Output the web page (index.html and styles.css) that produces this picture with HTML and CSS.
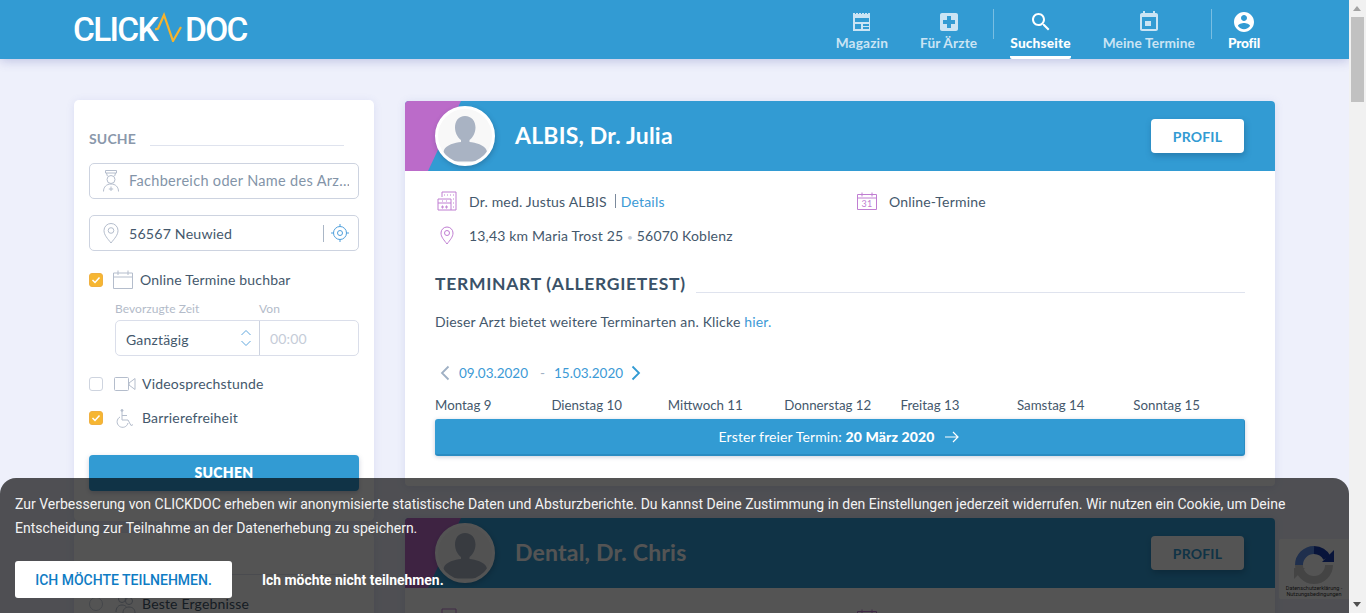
FILE: index.html
```html
<!DOCTYPE html>
<html lang="de">
<head>
<meta charset="utf-8">
<title>CLICKDOC Suchseite</title>
<link rel="stylesheet" href="styles.css">
</head>
<body>
<div class="viewport">
  <div class="page">
    <header class="topbar">
      <a class="logo"><span>CLICK</span><svg class="logo-pulse" width="28" height="30" viewBox="0 0 28 30"><path d="M0 17.500 L3 16.500 L9 3 L18 29 L26 15" fill="none" stroke="#f6b32d" stroke-width="2.200"/></svg><span>DOC</span></a>
      <nav class="nav">
        <a class="nav-item"><svg class="nav-icon" viewBox="0 0 24 24"><path d="M3 3h2v1h1V3h2v1h1V3h2v1h1V3h2v1h1V3h2v1h1V3h2v18H3zM5 8v4h14V8zm0 6v5h6v-5zm8 0v2h6v-2zm0 3v2h6v-2z" fill-rule="evenodd"/></svg><span>Magazin</span></a>
        <a class="nav-item"><svg class="nav-icon" viewBox="0 0 24 24"><path d="M19 3H5c-1.100 0-1.990.9-1.990 2L3 19c0 1.100.9 2 2 2h14c1.100 0 2-.9 2-2V5c0-1.100-.9-2-2-2zm-1 11h-4v4h-4v-4H6v-4h4V6h4v4h4v4z"/></svg><span>Für Ärzte</span></a>
        <i class="nav-divider"></i>
        <a class="nav-item is-active"><svg class="nav-icon" viewBox="0 0 24 24"><path d="M15.500 14h-.79l-.28-.27C15.410 12.590 16 11.110 16 9.500 16 5.910 13.090 3 9.500 3S3 5.910 3 9.500 5.910 16 9.500 16c1.610 0 3.090-.59 4.230-1.570l.27.28v.79l5 4.990L20.490 19l-4.990-5zm-6 0C7.010 14 5 11.990 5 9.500S7.010 5 9.500 5 14 7.010 14 9.500 11.990 14 9.500 14z"/></svg><span>Suchseite</span></a>
        <a class="nav-item"><svg class="nav-icon" viewBox="0 0 24 24"><path d="M14 11H8v5h6v-5zM16 1v2H8V1H6v2H5c-1.110 0-1.990.9-1.990 2L3 19c0 1.100.89 2 2 2h14c1.100 0 2-.9 2-2V5c0-1.100-.9-2-2-2h-1V1h-2zm3 18H5V7h14v12z"/></svg><span>Meine Termine</span></a>
        <i class="nav-divider"></i>
        <a class="nav-item is-strong"><svg class="nav-icon" viewBox="0 0 24 24"><path d="M12 2C6.480 2 2 6.480 2 12s4.480 10 10 10 10-4.480 10-10S17.520 2 12 2zm0 3c1.660 0 3 1.340 3 3s-1.340 3-3 3-3-1.340-3-3 1.340-3 3-3zm0 14.200c-2.500 0-4.710-1.280-6-3.220.03-1.990 4-3.080 6-3.080 1.990 0 5.970 1.090 6 3.080-1.290 1.940-3.500 3.220-6 3.220z"/></svg><span>Profil</span></a>
      </nav>
    </header>

    <div class="layout">
      <aside class="sidebar">
        <section class="panel">
          <div class="panel-title"><span>SUCHE</span><i></i></div>
          <div class="field field-first">
            <svg class="field-icon" width="16" height="22" viewBox="0 0 16 22"><g fill="none" stroke="#b4bdcc"><path d="M2.500 .5h11v2.500h-11zM3.500 3l.8 3M12.500 3l-.8 3"/><circle cx="8" cy="9.500" r="4"/><path d="M.5 21.500c0-4.500 3-7.500 7.500-7.500s7.500 3 7.500 7.500M8 16.500v4.500M5.800 19h4.400"/></g></svg>
            <span class="placeholder">Fachbereich oder Name des Arz...</span>
          </div>
          <div class="field field-second">
            <svg class="field-icon" width="16" height="21" viewBox="0 0 16 21"><g fill="none" stroke="#b4bdcc"><path d="M8 20C4.500 15.500 1 12 1 7.500a7 7 0 0 1 14 0C15 12 11.500 15.500 8 20z"/><circle cx="8" cy="7.500" r="2.800"/></g></svg>
            <span class="value">56567 Neuwied</span>
            <i class="field-sep"></i>
            <svg class="locate" width="18" height="18" viewBox="0 0 18 18"><g fill="none" stroke="#4f9fdc"><circle cx="9" cy="9" r="6.500"/><circle cx="9" cy="9" r="2.500"/><path d="M9 0v2.500M9 15.500V18M0 9h2.500M15.500 9H18"/></g></svg>
          </div>
          <div class="option option-online">
            <span class="check is-on"><svg width="10" height="8" viewBox="0 0 10 8"><path d="M1.500 4l2.500 2.500 4.500-5" fill="none" stroke="#fff" stroke-width="1.500"/></svg></span>
            <svg class="option-icon" width="20" height="19" viewBox="0 0 20 19"><g fill="none" stroke="#b4bdcc"><path d="M.5 3h19v15.500H.5zM.5 7h19M5 .5V5M15 .5V5"/></g></svg>
            <span class="option-label">Online Termine buchbar</span>
          </div>
          <div class="time-labels"><span>Bevorzugte Zeit</span><span>Von</span></div>
          <div class="time-row">
            <div class="time-select"><span>Ganztägig</span><svg width="12" height="20" viewBox="0 0 12 20"><path d="M1.500 7L6 2.500 10.500 7M1.500 13L6 17.500 10.500 13" fill="none" stroke="#5fa7de"/></svg></div>
            <div class="time-from">00:00</div>
          </div>
          <div class="option option-video">
            <span class="check"></span>
            <svg class="option-icon" width="22" height="14" viewBox="0 0 22 14"><g fill="none" stroke="#b4bdcc"><rect x=".5" y=".5" width="14" height="13" rx="1"/><path d="M15 6l6-4.500v11L15 8z"/></g></svg>
            <span class="option-label">Videosprechstunde</span>
          </div>
          <div class="option option-access">
            <span class="check is-on"><svg width="10" height="8" viewBox="0 0 10 8"><path d="M1.500 4l2.500 2.500 4.500-5" fill="none" stroke="#fff" stroke-width="1.500"/></svg></span>
            <svg class="option-icon option-icon-wheel" width="18" height="19" viewBox="0 0 18 19"><g fill="none" stroke="#b4bdcc"><circle cx="6" cy="1.500" r="1" fill="#b4bdcc"/><path d="M6 3v8h6l3 5.500 2-.8M6 6.500h5"/><path d="M4 8a5.500 5.500 0 1 0 8 6"/></g></svg>
            <span class="option-label">Barrierefreiheit</span>
          </div>
          <button class="search-btn">SUCHEN</button>
        </section>
        <section class="panel panel-sort">
          <div class="panel-title"><i></i></div>
          <div class="option option-sort">
            <span class="radio"></span>
            <svg class="option-icon" width="22" height="20" viewBox="0 0 22 20"><g fill="none" stroke="#b4bdcc"><circle cx="8" cy="5" r="3.500"/><circle cx="15" cy="7" r="3.500"/><path d="M2 18c0-4.500 2.500-7 6-7 2 0 3.500.8 4.500 2M9 19c0-4 2.500-6 6-6s6 2 6 6"/></g></svg>
            <span class="option-label">Beste Ergebnisse</span>
          </div>
        </section>
      </aside>

      <main class="results">
        <article class="doctor">
          <header class="doctor-head">
            <i class="doctor-accent"></i>
            <span class="avatar"><svg width="54" height="54" viewBox="0 0 54 54"><path d="M27 7c6.500 0 10.500 5 10.500 11.500 0 5-2.500 10-6 12.500v2c6 .5 15 3 17 8 1 3 .5 9-1 11.500H7c-1.500-2.500-2-8.500-1-11.500 2-5 11-7.500 17-8v-2c-3.500-2.500-6-7.500-6-12.500C17 12 20.500 7 27 7z" fill="#a9b3c3"/></svg></span>
            <h2>ALBIS, Dr. Julia</h2>
            <a class="profile-btn">PROFIL</a>
          </header>
          <div class="doctor-body">
            <div class="info-row">
              <div class="info-cell">
                <svg class="info-icon" width="20" height="20" viewBox="0 0 20 20"><g fill="none" stroke="#c07ed2"><path d="M5 6V1h14v18h-5M7 4h1M10 4h1M13 4h1M16 4h1M16 8h1M16 12h1M16 16h1"/><path d="M1 8h13v11H1zM1 12h13M5 10h1M9 10h1M5 15h1v2H5zM9 15h1v2H9z"/></g></svg>
                <span>Dr. med. Justus ALBIS</span><span class="info-sep"></span><a class="link">Details</a>
              </div>
              <div class="info-cell">
                <svg class="info-icon" width="20" height="18" viewBox="0 0 20 18"><g fill="none" stroke="#c07ed2"><path d="M.5 2.500h19v15H.5zM.5 6h19M5 .5v4M15 .5v4"/></g><text x="10" y="15" class="cal-num">31</text></svg>
                <span>Online-Termine</span>
              </div>
            </div>
            <div class="info-row info-row-second">
              <div class="info-cell">
                <svg class="info-icon" width="20" height="20" viewBox="0 0 20 20"><g fill="none" stroke="#c07ed2"><path d="M10 19C7 15 4 12 4 8a6 6 0 0 1 12 0c0 4-3 7-6 11z"/><circle cx="10" cy="8" r="2.500"/></g></svg>
                <span>13,43 km Maria Trost 25 <em class="dot">•</em> 56070 Koblenz</span>
              </div>
            </div>
            <div class="type-title"><h3>TERMINART (ALLERGIETEST)</h3><i></i></div>
            <p class="type-note">Dieser Arzt bietet weitere Terminarten an. Klicke <a class="link">hier.</a></p>
            <div class="week-nav">
              <svg width="10" height="16" viewBox="0 0 10 16"><path d="M8.500 1.500L2 8l6.500 6.500" fill="none" stroke="#9fb0c4" stroke-width="1.800"/></svg>
              <span class="date">09.03.2020</span><span class="dash">-</span><span class="date">15.03.2020</span>
              <svg width="10" height="16" viewBox="0 0 10 16"><path d="M1.500 1.500L8 8l-6.500 6.500" fill="none" stroke="#329bd3" stroke-width="1.800"/></svg>
            </div>
            <div class="week-days"><span>Montag 9</span><span>Dienstag 10</span><span>Mittwoch 11</span><span>Donnerstag 12</span><span>Freitag 13</span><span>Samstag 14</span><span>Sonntag 15</span></div>
            <a class="first-free">Erster freier Termin:&nbsp;<b>20 März 2020</b><svg width="16" height="12" viewBox="0 0 16 12"><path d="M1 6h13M9 1l5 5-5 5" fill="none" stroke="#fff" stroke-width="1.200"/></svg></a>
          </div>
        </article>
        <article class="doctor">
          <header class="doctor-head">
            <i class="doctor-accent"></i>
            <span class="avatar"><svg width="54" height="54" viewBox="0 0 54 54"><path d="M27 7c6.500 0 10.500 5 10.500 11.500 0 5-2.500 10-6 12.500v2c6 .5 15 3 17 8 1 3 .5 9-1 11.500H7c-1.500-2.500-2-8.500-1-11.500 2-5 11-7.500 17-8v-2c-3.500-2.500-6-7.500-6-12.500C17 12 20.500 7 27 7z" fill="#a9b3c3"/></svg></span>
            <h2>Dental, Dr. Chris</h2>
            <a class="profile-btn">PROFIL</a>
          </header>
          <div class="doctor-body">
            <div class="info-row">
              <div class="info-cell">
                <svg class="info-icon" width="20" height="20" viewBox="0 0 20 20"><g fill="none" stroke="#c07ed2"><path d="M5 6V1h14v18h-5"/><path d="M1 8h13v11H1z"/></g></svg>
              </div>
              <div class="info-cell">
                <svg class="info-icon" width="20" height="18" viewBox="0 0 20 18"><g fill="none" stroke="#c07ed2"><path d="M.5 2.500h19v15H.5zM.5 6h19M5 .5v4M15 .5v4"/></g></svg>
              </div>
            </div>
          </div>
        </article>
      </main>
    </div>

    <aside class="recaptcha">
      <svg width="44" height="44" viewBox="0 0 44 44"><g fill="none" stroke-width="8"><path d="M7 22a15 15 0 0 1 15-15" stroke="#5f8fe8"/><path d="M22 7a15 15 0 0 1 13 8" stroke="#1a3fb0"/><path d="M37 22a15 15 0 0 1-30 0" stroke="#cfcfcf"/></g><path d="M30 19h12V7z" fill="#1a3fb0"/><path d="M2 25h11l-11 11z" fill="#cfcfcf"/></svg>
      <small>Datenschutzerklärung - Nutzungsbedingungen</small>
    </aside>

    <section class="cookie">
      <p>Zur Verbesserung von CLICKDOC erheben wir anonymisierte statistische Daten und Absturzberichte. Du kannst Deine Zustimmung in den Einstellungen jederzeit widerrufen. Wir nutzen ein Cookie, um Deine Entscheidung zur Teilnahme an der Datenerhebung zu speichern.</p>
      <div class="cookie-actions">
        <button class="cookie-accept">ICH MÖCHTE TEILNEHMEN.</button>
        <a class="cookie-decline">Ich möchte nicht teilnehmen.</a>
      </div>
    </section>
  </div>
  <div class="scrollbar">
    <i class="arrow-up"></i>
    <i class="thumb"></i>
    <i class="arrow-down"></i>
  </div>
</div>
</body>
</html>
```
FILE: styles.css
```css
* { box-sizing: border-box; }
html, body { margin: 0; height: 100%; overflow: hidden; }
body { font-family: Lato, "Open Sans", sans-serif; font-size: 14px; color: #44586c; letter-spacing: .18px; }
h2, h3, p { margin: 0; }
em { font-style: normal; }
i { display: block; font-style: normal; }

.viewport { display: flex; height: 613px; }
.page { position: relative; flex: 1; min-width: 0; overflow: hidden; background: #eef0fb; }

.topbar { display: flex; justify-content: space-between; height: 59px; padding: 0 73px 0 73px; background: #329bd3; box-shadow: 0 2px 10px rgba(70, 80, 170, .28); position: relative; z-index: 1; }
.logo { display: flex; align-items: flex-start; font-family: Roboto, sans-serif; font-size: 33.500px; font-weight: 500; color: #fff; letter-spacing: -1.700px; line-height: 59px; height: 59px; }
.logo span { display: block; }
.logo-pulse { margin: 12px 2px 0 -2px; flex: none; }
.nav { display: flex; align-items: flex-start; }
.nav-item { display: flex; flex-direction: column; align-items: center; height: 59px; margin: 0 16px; padding-top: 10px; color: #cbe4f4; font-weight: 700; font-size: 13.700px; line-height: 20px; letter-spacing: .15px; white-space: nowrap; }
.nav-icon { width: 24px; height: 24px; margin-bottom: -1px; fill: #cbe4f4; }
.nav-item.is-active { color: #fff; border-bottom: 3px solid #fff; border-radius: 0 0 2px 2px; font-weight: 900; }
.nav-item.is-active .nav-icon, .nav-item.is-strong .nav-icon { fill: #fff; }
.nav-item.is-strong { color: #fff; font-weight: 900; letter-spacing: -.2px; }
.nav-divider { width: 1px; height: 30px; margin-top: 9px; background: rgba(255, 255, 255, .35); }

.layout { display: grid; grid-template-columns: 300px 870px; gap: 31px; padding: 41px 0 0 74px; }
.panel { background: #fff; border-radius: 5px; padding: 30px 15px; box-shadow: 0 1px 8px rgba(90, 100, 190, .12); }
.panel-sort { margin-top: 12px; padding-top: 26px; }
.panel-title { display: flex; align-items: flex-start; height: 18px; color: #8a98ab; font-weight: 700; font-size: 14px; line-height: 18px; }
.panel-title i { flex: 1; height: 1px; margin: 15px 15px 0 14px; background: #dfe3ee; }

.field { display: flex; align-items: center; height: 36px; border: 1px solid #cdd3e0; border-radius: 5px; padding: 0 9px 0 13px; }
.field-first { margin-top: 15px; }
.field-second { margin-top: 16px; }
.field-icon { flex: none; margin-right: 10px; }
.placeholder { color: #8394a8; white-space: nowrap; overflow: hidden; font-size: 14.500px; letter-spacing: .32px; line-height: 20px; }
.value { flex: 1; color: #44586c; font-size: 14.200px; }
.field-sep { width: 1px; height: 17px; background: #aab6c6; margin-right: 7px; }
.locate { flex: none; }

.option { display: flex; align-items: center; height: 20px; }
.option-label { margin-bottom: 2px; }
.option-online { margin-top: 19px; }
.option-video { margin-top: 18px; }
.option-access { margin-top: 14px; }
.option-sort { margin-top: 17px; }
.check { display: flex; align-items: center; justify-content: center; flex: none; width: 14px; height: 14px; border: 1px solid #ced4df; border-radius: 3px; background: #fff; }
.check.is-on { background: #f6b632; border-color: #f0b040; }
.radio { flex: none; width: 14px; height: 14px; border: 1px solid #ced4df; border-radius: 50%; }
.option-icon { flex: none; margin: 0 6px 0 11px; }
.option-icon-wheel { margin: 0 8px 0 13px; }
.option-online .option-icon { margin: -2px 7px 0 10px; }

.time-labels { display: grid; grid-template-columns: 144px 1fr; margin: 11px 0 0 26px; height: 16px; font-size: 12px; letter-spacing: .05px; line-height: 16px; color: #b3bbc9; }
.time-row { display: grid; grid-template-columns: 144px 1fr; margin: 3px 0 0 26px; height: 36px; border: 1px solid #dadeea; border-radius: 5px; }
.time-select { display: flex; align-items: center; justify-content: space-between; padding: 2px 7px 0 10px; border-right: 1px solid #cdd3e0; }
.time-select svg { margin-top: -2px; }
.time-from { display: flex; align-items: center; padding-left: 10px; color: #c5ccd8; }

.search-btn { display: block; width: 100%; height: 36px; margin-top: 27px; padding: 0 0 2px; border: 0; border-radius: 4px; background: #329bd3; color: #fff; font: 800 14px Lato, sans-serif; letter-spacing: .3px; box-shadow: 0 2px 5px rgba(60, 70, 120, .25); }

.results { display: flex; flex-direction: column; gap: 32px; padding-top: 1px; }
.doctor { background: #fff; border-radius: 4px; box-shadow: 0 1px 8px rgba(90, 100, 190, .15); }
.doctor-head { position: relative; display: flex; align-items: center; height: 70px; padding: 0 31px 0 30px; background: #329bd3; border-radius: 4px 4px 0 0; overflow: hidden; }
.doctor-accent { position: absolute; left: 0; top: 0; width: 56px; height: 70px; background: #bb6bc9; clip-path: polygon(0 0, 56px 0, 23px 100%, 0 100%); }
.avatar { position: relative; display: flex; align-items: flex-end; justify-content: center; width: 60px; height: 60px; border: 3px solid #fff; border-radius: 50%; background: #f8f8f8; box-shadow: 1px 2px 5px rgba(30, 60, 90, .3); overflow: hidden; flex: none; }
.doctor-head h2 { flex: 1; margin: 0 0 2px 20px; color: #fff; font-size: 23px; font-weight: 700; letter-spacing: .2px; }
.profile-btn { display: flex; align-items: center; justify-content: center; width: 93px; height: 34px; background: #fff; border-radius: 4px; color: #329bd3; font-size: 14px; font-weight: 700; box-shadow: 1px 3px 6px rgba(20, 70, 110, .35); }

.doctor-body { padding: 18px 30px 30px; }
.info-row { display: grid; grid-template-columns: 420px 1fr; height: 24px; }
.info-row-second { margin-top: 10px; }
.info-cell { display: flex; align-items: center; white-space: nowrap; }
.info-icon { flex: none; margin-right: 12px; margin-left: 2px; }
.cal-num { font: 9px Lato, sans-serif; fill: #c07ed2; text-anchor: middle; }
.info-sep { width: 1px; height: 14px; margin: 0 5px 0 8px; background: #7b8a9c; }
.link { color: #3c9ad6; }
.dot { color: #c3cbd6; font-size: 10px; }

.type-title { display: flex; align-items: flex-end; height: 24px; margin-top: 25px; }
.type-title h3 { color: #3a5268; font-size: 17.500px; line-height: 24px; font-weight: 700; white-space: nowrap; letter-spacing: .7px; }
.type-title i { flex: 1; height: 1px; margin: 0 0 3px 10px; background: #dfe3ee; }
.type-note { margin-top: 14px; line-height: 24px; }
.week-nav { display: flex; align-items: center; height: 20px; margin-top: 29px; padding-left: 5px; color: #3c9ad6; font-size: 13.500px; letter-spacing: 0; }
.week-nav svg { flex: none; }
.date { margin-left: 9px; }
.dash { margin: 0 0 0 12px; color: #9fb0c4; }
.date + .dash + .date { margin-left: 9px; }
.week-nav svg:last-child { margin-left: 8px; }
.week-days { display: grid; grid-template-columns: repeat(7, 116.400px); height: 20px; margin-top: 12px; font-size: 13.300px; letter-spacing: 0; line-height: 20px; white-space: nowrap; }
.first-free { display: flex; align-items: center; justify-content: center; height: 37px; margin-top: 4px; background: #329bd3; border-bottom: 2px solid #2a8cc2; border-right: 1px solid #2a8cc2; border-radius: 3px; color: #fff; font-size: 14px; letter-spacing: .12px; box-shadow: 0 1px 4px rgba(40, 60, 110, .25); }
.first-free b { font-weight: 900; }
.first-free svg { margin-left: 10px; }

.recaptcha { position: absolute; left: 1279px; top: 539px; display: flex; flex-direction: column; align-items: center; width: 70px; height: 60px; padding-top: 4px; background: #fff; border-radius: 2px 0 0 2px; }
.recaptcha small { display: block; margin-top: -2px; color: #333; font: 5.500px/6px Roboto, sans-serif; letter-spacing: 0; text-align: center; }

.cookie { position: absolute; left: 0; right: 0; top: 478px; bottom: 0; padding: 14px 15px 0; background: rgba(0, 0, 0, .67); border-radius: 16px 16px 0 0; font-family: Roboto, sans-serif; font-size: 14px; letter-spacing: 0; color: #f3f3f3; }
.cookie p { line-height: 24px; }
.cookie-actions { display: flex; align-items: center; margin-top: 21px; }
.cookie-accept { width: 217px; height: 37px; border: 0; border-radius: 3px; background: #fff; color: #0f7cc4; font: 500 14px Roboto, sans-serif; }
.cookie-decline { margin-left: 30px; color: #fff; font-size: 13.900px; font-weight: 700; }

.scrollbar { position: relative; flex: none; width: 17px; background: #f1f1f1; }
.thumb { position: absolute; left: 2px; top: 17px; width: 13px; height: 85px; background: #c1c1c1; }
.arrow-up, .arrow-down { position: absolute; left: 4px; width: 0; height: 0; border-left: 4.500px solid transparent; border-right: 4.500px solid transparent; }
.arrow-up { top: 6px; border-bottom: 5px solid #a3a3a3; }
.arrow-down { bottom: 6px; border-top: 5px solid #505050; }
```
